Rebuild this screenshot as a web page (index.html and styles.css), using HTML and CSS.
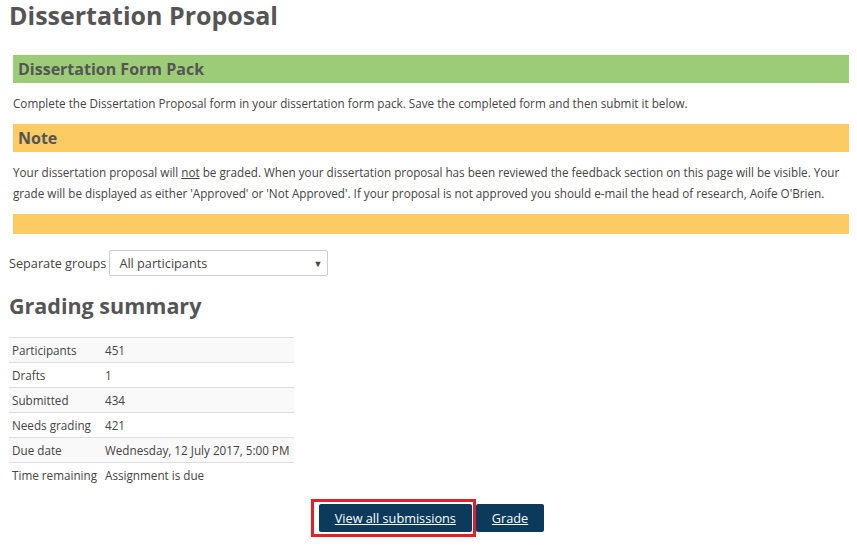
FILE: index.html
```html
<!DOCTYPE html>
<html lang="en">
<head>
  <meta charset="UTF-8" />
  <title>Dissertation Proposal</title>
  <link rel="stylesheet" href="styles.css">
</head>
<body>
  <div class="page">
    <h1>Dissertation Proposal</h1>

    <div class="intro">
      <h3 class="bar green">Dissertation Form Pack</h3>
      <p>Complete the Dissertation Proposal form in your dissertation form pack. Save the completed form and then submit it below.</p>
      <h3 class="bar orange">Note</h3>
      <p>Your dissertation proposal will <u>not</u> be graded. When your dissertation proposal has been reviewed the feedback section on this page will be visible. Your grade will be displayed as either 'Approved' or 'Not Approved'. If your proposal is not approved you should e-mail the head of research, Aoife O'Brien.</p>
      <div class="bar orange empty"></div>
    </div>

    <div class="groups">
      <label>Separate groups</label>
      <div class="select">
        <span>All participants</span>
        <span class="arrow">&#9660;</span>
      </div>
    </div>

    <h2>Grading summary</h2>
    <table class="summary">
      <tr><td>Participants</td><td>451</td></tr>
      <tr><td>Drafts</td><td>1</td></tr>
      <tr><td>Submitted</td><td>434</td></tr>
      <tr><td>Needs grading</td><td>421</td></tr>
      <tr><td>Due date</td><td>Wednesday, 12 July 2017, 5:00 PM</td></tr>
      <tr><td>Time remaining</td><td>Assignment is due</td></tr>
    </table>

    <div class="actions">
      <span class="highlight"><a href="#" class="btn">View all submissions</a></span>
      <a href="#" class="btn">Grade</a>
    </div>
  </div>
</body>
</html>
```

FILE: styles.css
```css
body {
  margin: 0;
  font-family: 'Open Sans', sans-serif;
  color: #444;
  background: #fff;
}

.page {
  padding: 1px 8px 0 9px;
}

h1 {
  font-size: 25px;
  line-height: 28px;
  font-weight: 700;
  color: #555;
  margin: 0;
}

.intro {
  margin: 26px 0 0 4px;
}

.bar {
  margin: 0;
  padding: 0 5px;
  height: 28px;
  line-height: 28px;
  font-size: 16px;
  font-weight: 700;
  color: #555;
}

.green {
  background: #9ccc78;
}

.orange {
  background: #fccb63;
}

.empty {
  height: 20px;
}

.intro p {
  margin: 10px 0;
  font-size: 11.7px;
  line-height: 21px;
}

.groups {
  display: flex;
  align-items: center;
  margin-top: 16px;
  font-size: 12.7px;
}

.groups label {
  margin-right: 3px;
}

.select {
  display: flex;
  justify-content: space-between;
  align-items: center;
  height: 24px;
  width: 203px;
  border: 1px solid #ccc;
  border-radius: 2px;
  padding: 0 5px 0 9px;
}

.arrow {
  font-size: 9px;
  color: #444;
}

h2 {
  font-size: 21.5px;
  line-height: 28px;
  font-weight: 700;
  color: #555;
  margin: 16px 0 17px;
}

.summary {
  border-collapse: collapse;
  width: 285px;
  font-size: 11.7px;
}

.summary td {
  height: 24px;
  padding: 0 3px;
  border-top: 1px solid #ddd;
  white-space: nowrap;
}

.summary td:first-child {
  width: 87px;
}

.summary tr:nth-child(odd) {
  background: #f9f9f9;
}

.summary tr:last-child td {
  background: #fff;
}

.actions {
  display: flex;
  justify-content: center;
  align-items: center;
  margin-top: 12px;
  padding-right: 3px;
}

.highlight {
  display: inline-flex;
  border: 3px solid #e2202b;
  padding: 2px 1px 2px 5px;
}

.btn {
  display: inline-block;
  height: 28px;
  line-height: 28px;
  padding: 0 16px;
  background: #0c3a5b;
  color: #fff;
  font-size: 12.7px;
  border-radius: 2px;
  text-decoration: underline;
}
```
